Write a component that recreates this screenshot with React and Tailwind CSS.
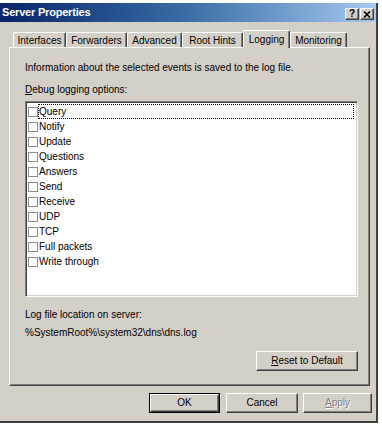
import React from "react";

const raised =
  "bg-[#d4d0c8] border border-t-white border-l-white border-r-[#404040] border-b-[#404040] shadow-[inset_-1px_-1px_#808080]";

function Tab({ label, w, selected }) {
  if (selected) {
    return (
      <div
        className={`relative z-10 h-[18px] -mb-[1px] ${w} flex items-start justify-center pt-[4px] bg-[#d4d0c8] border-t border-l border-white border-r border-r-[#404040] rounded-t-[2px] shadow-[inset_-1px_0_#808080]`}
      >
        {label}
      </div>
    );
  }
  return (
    <div
      className={`h-[15px] ${w} flex items-start justify-center pt-[3px] bg-[#d4d0c8] border-t border-l border-white border-r border-r-[#404040] rounded-t-[2px] shadow-[inset_-1px_0_#808080]`}
    >
      {label}
    </div>
  );
}

const items = [
  "Query",
  "Notify",
  "Update",
  "Questions",
  "Answers",
  "Send",
  "Receive",
  "UDP",
  "TCP",
  "Full packets",
  "Write through",
];

export default function App() {
  return (
    <div className="w-[382px] h-[425px] bg-white overflow-hidden font-['Liberation_Sans',Arial,sans-serif] text-[10px] text-black leading-none">
      <div className="mt-[3px] w-[378px] h-[420px] bg-[#d4d0c8] border-r-2 border-b-2 border-r-[#404040] border-b-[#404040] flex flex-col">
        {/* Title bar */}
        <div className="h-[19px] flex items-end justify-between bg-gradient-to-r from-[#0a246a] via-[#3a6ea5] to-[#a6caf0]">
          <div className="self-center pl-[2px] text-white font-bold text-[11px] tracking-[-0.2px]">
            Server Properties
          </div>
          <div className="flex gap-[1px] mb-[2px] mr-[2px]">
            <div className={`w-[14px] h-[12px] ${raised} flex items-center justify-center font-bold text-[10px]`}>
              ?
            </div>
            <div className={`w-[14px] h-[12px] ${raised} flex items-center justify-center`}>
              <svg width="8" height="7" viewBox="0 0 8 7">
                <path d="M1 0.5 L7 6.5 M7 0.5 L1 6.5" stroke="#000" strokeWidth="1.6" />
              </svg>
            </div>
          </div>
        </div>

        {/* Tabs */}
        <div className="mt-[8px] ml-[13px] flex items-end h-[17px]">
          <Tab label="Interfaces" w="w-[53px]" />
          <Tab label="Forwarders" w="w-[61px]" />
          <Tab label="Advanced" w="w-[55px]" />
          <Tab label="Root Hints" w="w-[61px]" />
          <Tab label="Logging" w="w-[47px]" selected />
          <Tab label="Monitoring" w="w-[57px]" />
        </div>

        {/* Panel */}
        <div className="ml-[9px] w-[361px] h-[339px] border border-t-white border-l-white border-r-[#404040] border-b-[#404040] shadow-[inset_-1px_-1px_#808080] flex flex-col pl-[15px] pr-[11px]">
          <div className="mt-[14px] h-[12px] flex items-center">
            Information about the selected events is saved to the log file.
          </div>
          <div className="mt-[10px] h-[12px] flex items-center">
            <span>
              <span className="underline">D</span>ebug logging options:
            </span>
          </div>
          <div className="mt-[5px] w-[333px] h-[196px] bg-white border border-t-[#808080] border-l-[#808080] border-r-white border-b-white shadow-[inset_1px_1px_#404040,inset_-1px_-1px_#d4d0c8] p-[2px] pt-[2px] flex flex-col">
            {items.map((it, i) => (
              <div key={it} className="h-[15px] flex items-center">
                <div className="w-[10px] h-[10px] border border-[#8c8c8c] bg-white shrink-0" />
                <div
                  className={`h-[15px] flex items-center ${
                    i === 0 ? "flex-1 mr-[1px] border border-dotted border-black" : "border border-transparent"
                  }`}
                >
                  {it}
                </div>
              </div>
            ))}
          </div>
          <div className="mt-[12px] h-[12px] flex items-center">Log file location on server:</div>
          <div className="mt-[6px] h-[12px] flex items-center">%SystemRoot%\system32\dns\dns.log</div>
          <div className="mt-[12px] flex justify-end">
            <div className={`w-[102px] h-[20px] ${raised} flex items-center justify-center`}>
              <span>
                <span className="underline">R</span>eset to Default
              </span>
            </div>
          </div>
        </div>

        {/* Bottom buttons */}
        <div className="mt-[7px] ml-[149px] flex">
          <div className="w-[71px] h-[20px] border border-black">
            <div className={`w-full h-full ${raised} flex items-center justify-center`}>OK</div>
          </div>
          <div className={`ml-[6px] w-[72px] h-[20px] ${raised} flex items-center justify-center`}>Cancel</div>
          <div className={`ml-[5px] w-[69px] h-[20px] ${raised} flex items-center justify-center text-[#808080] [text-shadow:1px_1px_#ffffff]`}>
            <span>
              <span className="underline">A</span>pply
            </span>
          </div>
        </div>
      </div>
    </div>
  );
}
